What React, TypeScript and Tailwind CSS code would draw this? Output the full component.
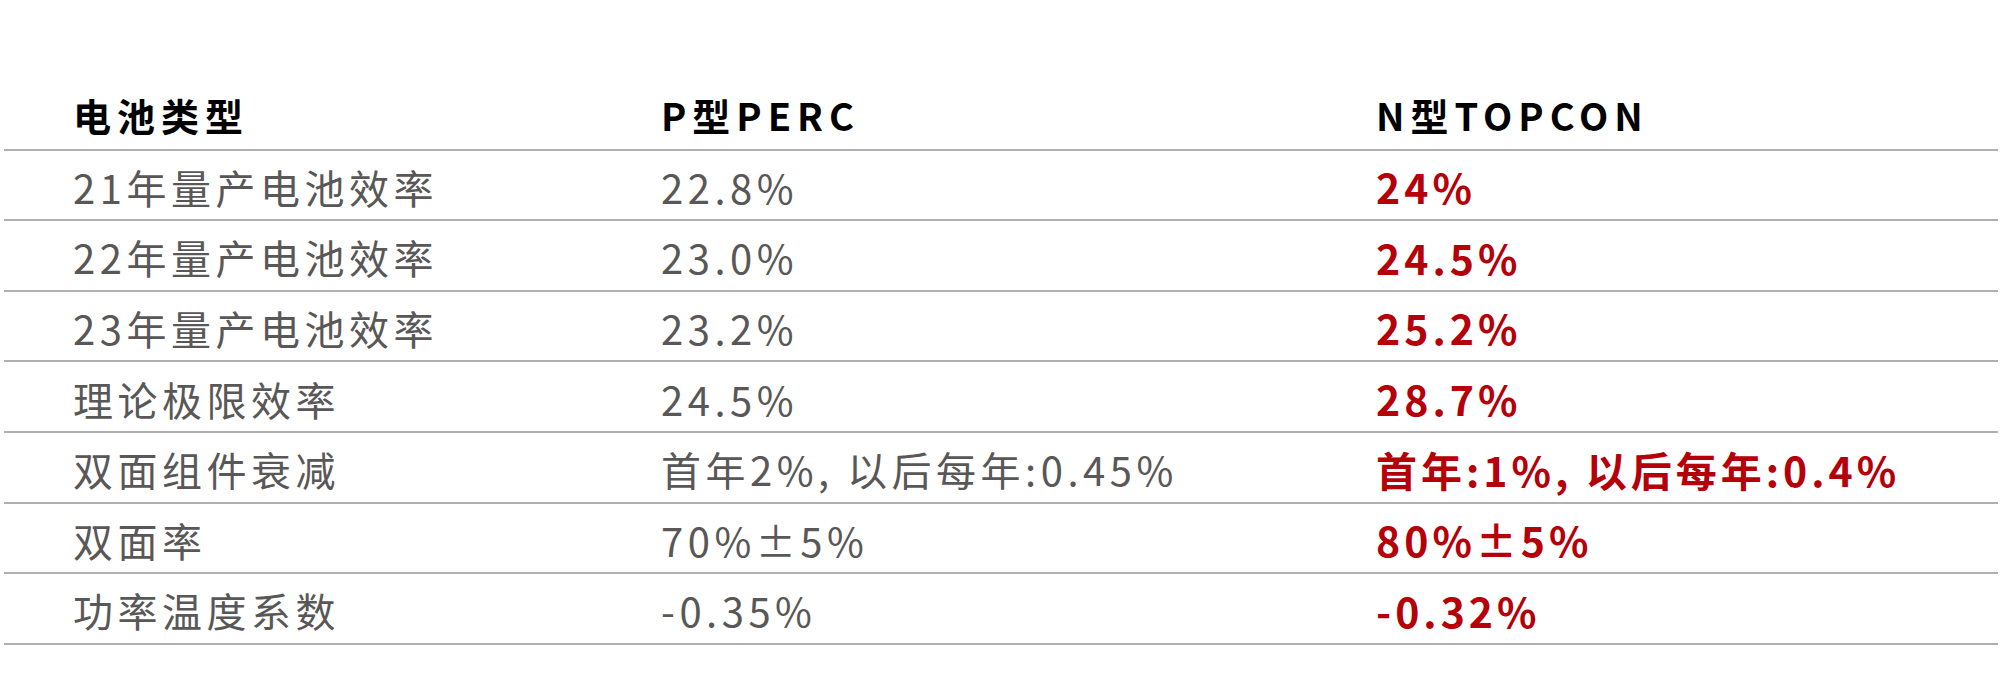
import React from 'react';

type Row = { label: string; perc: string; topcon: string };

const rows: Row[] = [
  { label: '21年量产电池效率', perc: '22.8%', topcon: '24%' },
  { label: '22年量产电池效率', perc: '23.0%', topcon: '24.5%' },
  { label: '23年量产电池效率', perc: '23.2%', topcon: '25.2%' },
  { label: '理论极限效率', perc: '24.5%', topcon: '28.7%' },
  { label: '双面组件衰减', perc: '首年2%, 以后每年:0.45%', topcon: '首年:1%, 以后每年:0.4%' },
  { label: '双面率', perc: '70%±5%', topcon: '80%±5%' },
  { label: '功率温度系数', perc: '-0.35%', topcon: '-0.32%' },
];

const font = "font-['Noto_Sans_CJK_SC','Noto_Sans',sans-serif]";

export default function App() {
  return (
    <div className={`w-[2002px] h-[691px] bg-white pt-[80px] ${font}`}>
      <div className="mx-[4px]">
        <div className="grid grid-cols-[588px_715px_1fr] h-[70.6px] border-b-2 border-[#b0b0b0] items-center">
          <div className="pl-[69px] text-[38px] font-bold tracking-[6px] text-black">电池类型</div>
          <div className="pl-[69px] text-[38px] font-bold tracking-[6px] text-black">P型PERC</div>
          <div className="pl-[69px] text-[38px] font-bold tracking-[6px] text-black">N型TOPCON</div>
        </div>
        {rows.map((r) => (
          <div
            key={r.label}
            className="grid grid-cols-[588px_715px_1fr] h-[70.6px] border-b-2 border-[#b0b0b0] items-center pt-1"
          >
            <div className="pl-[69px] text-[40px] tracking-[4.5px] text-[#595757]">{r.label}</div>
            <div className="pl-[69px] text-[40px] tracking-[4.5px] text-[#595757]">{r.perc}</div>
            <div className="pl-[69px] text-[41px] font-bold tracking-[4px] text-[#b5000a]">{r.topcon}</div>
          </div>
        ))}
      </div>
    </div>
  );
}
